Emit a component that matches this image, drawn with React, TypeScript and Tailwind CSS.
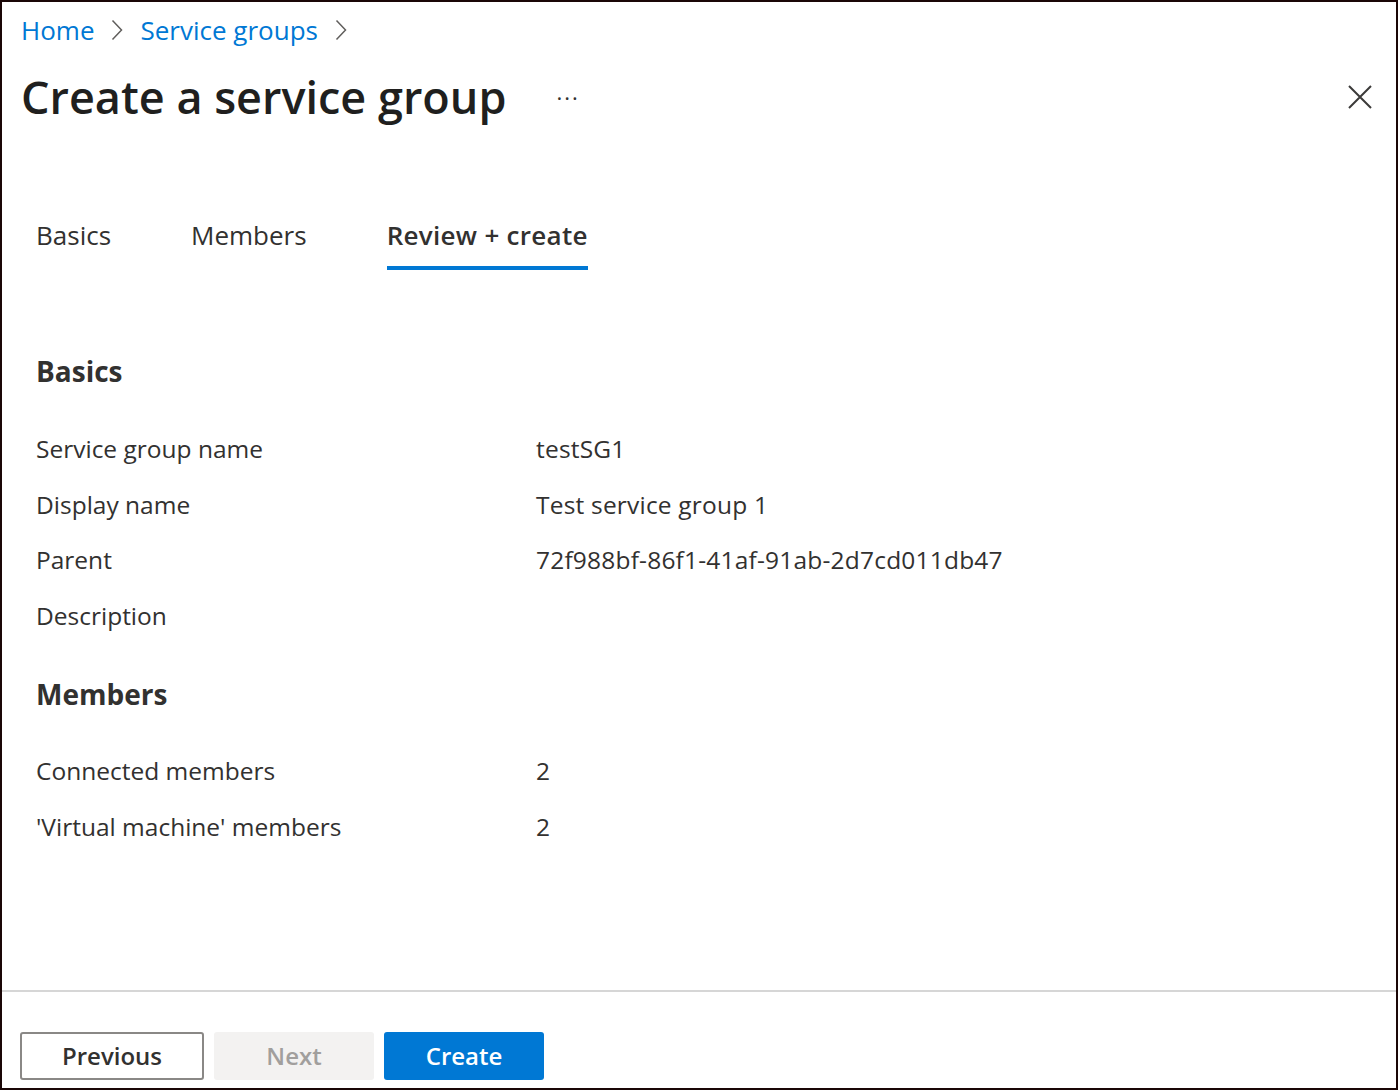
const font = { fontFamily: '"Open Sans", "Noto Sans", sans-serif' }

function Chevron() {
  return (
    <svg width="12" height="22" viewBox="0 0 12 22" fill="none" className="shrink-0">
      <path d="M1.5 1.5 L10.5 11 L1.5 20.5" stroke="#605e5c" strokeWidth="1.5" />
    </svg>
  )
}

function Row({ label, value }: { label: string; value?: string }) {
  return (
    <div className="flex h-[55.5px] items-center text-[24.5px] text-[#323130]">
      <div className="w-[500px]">{label}</div>
      <div className="tracking-[0.2px]">{value}</div>
    </div>
  )
}

export default function App() {
  return (
    <div
      className="flex h-[1090px] w-[1398px] flex-col overflow-hidden border-2 border-[#1a0606] bg-white"
      style={font}
    >
      <div className="px-[19px]">
        {/* Breadcrumb */}
        <div className="mt-[12px] flex h-[32px] items-center gap-[17px] text-[26px] text-[#0078d4]">
          <span>Home</span>
          <Chevron />
          <span>Service groups</span>
          <Chevron />
        </div>

        {/* Title */}
        <div className="mt-[23px] flex h-[56px] items-center">
          <h1 className="text-[45px] font-semibold leading-[56px] text-[#201f1e]">Create a service group</h1>
          <span className="ml-[50px] text-[22px] tracking-[2px] text-[#323130]">···</span>
          <div className="flex-1" />
          <svg width="24" height="24" viewBox="0 0 24 24" className="mr-[5px]">
            <path d="M1 1 L23 23 M23 1 L1 23" stroke="#3b3a39" strokeWidth="2" />
          </svg>
        </div>

        {/* Tabs */}
        <div className="mt-[93px] flex gap-[80px] pl-[15px] text-[26px] leading-[34px] text-[#323130]">
          <div className="pb-[18px]">Basics</div>
          <div className="pb-[18px]">Members</div>
          <div className="border-b-4 border-[#0078d4] pb-[14px] font-semibold tracking-[0.3px]">Review + create</div>
        </div>

        {/* Summary */}
        <div className="pl-[15px]">
          <h2 className="mt-[83px] text-[28px] font-bold leading-[36px] text-[#323130]">Basics</h2>
          <div className="mt-[33px]">
            <Row label="Service group name" value="testSG1" />
            <Row label="Display name" value="Test service group 1" />
            <Row label="Parent" value="72f988bf-86f1-41af-91ab-2d7cd011db47" />
            <Row label="Description" />
          </div>
          <h2 className="mt-[32px] text-[28px] font-bold leading-[36px] text-[#323130]">Members</h2>
          <div className="mt-[32px]">
            <Row label="Connected members" value="2" />
            <Row label="'Virtual machine' members" value="2" />
          </div>
        </div>
      </div>

      <div className="flex-1" />

      {/* Footer */}
      <div className="border-t-2 border-[#d6d6d6] px-[18px] pb-[8px] pt-[40px]">
        <div className="flex gap-[10px] text-[24px] font-semibold">
          <button className="h-[48px] w-[184px] rounded-[3px] border-2 border-[#8a8886] text-[#323130]">Previous</button>
          <button className="h-[48px] w-[160px] rounded-[3px] bg-[#f3f2f1] text-[#a19f9d]">Next</button>
          <button className="h-[48px] w-[160px] rounded-[3px] bg-[#0078d4] text-white">Create</button>
        </div>
      </div>
    </div>
  )
}
